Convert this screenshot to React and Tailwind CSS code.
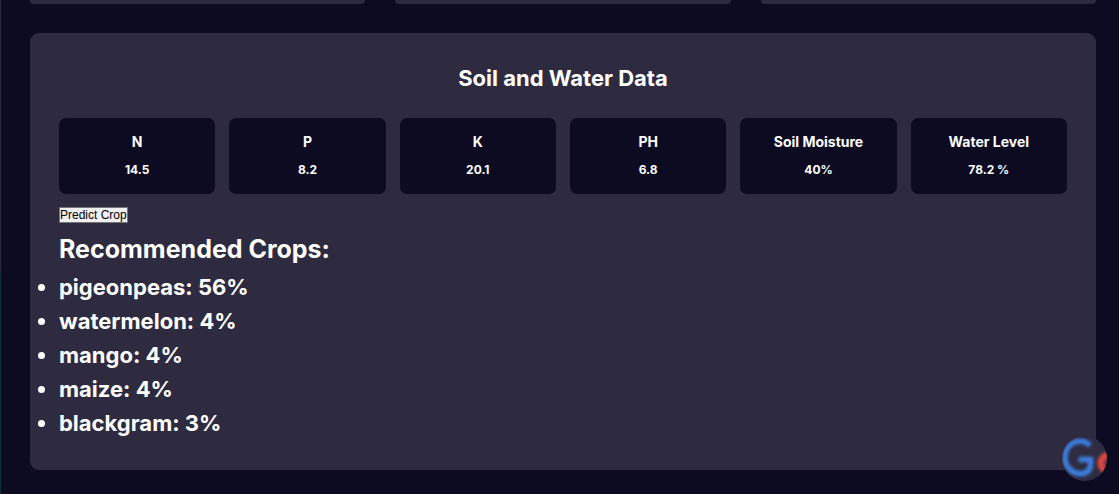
const readings = [
  { label: "N", value: "14.5" },
  { label: "P", value: "8.2" },
  { label: "K", value: "20.1" },
  { label: "PH", value: "6.8" },
  { label: "Soil Moisture", value: "40%" },
  { label: "Water Level", value: "78.2 %" },
];

const crops = [
  { name: "pigeonpeas", share: "56%" },
  { name: "watermelon", share: "4%" },
  { name: "mango", share: "4%" },
  { name: "maize", share: "4%" },
  { name: "blackgram", share: "3%" },
];

function Reading({ label, value }) {
  return (
    <div className="rounded-[7px] bg-[#0d0b21] px-2 py-[14px] text-center">
      <h3 className="text-[14px] leading-[20px]">{label}</h3>
      <p className="mt-2 text-[12px] leading-[20px]">{value}</p>
    </div>
  );
}

function FloatingLogo() {
  return (
    <a href="#assistant" aria-label="Assistant" className="fixed right-3 bottom-[13px] block size-[45px]">
      <svg viewBox="0 0 45 45" className="size-full">
        <defs>
          <clipPath id="frame">
            <rect x="0" y="1.500" width="45" height="43.500" />
          </clipPath>
          <clipPath id="disc">
            <circle cx="22.5" cy="22.5" r="22.5" />
          </clipPath>
          <filter id="soft" x="-20%" y="-20%" width="140%" height="140%">
            <feGaussianBlur stdDeviation="1.5" />
          </filter>
        </defs>
        <g clipPath="url(#frame)">
          <g clipPath="url(#disc)">
            <rect width="45" height="45" fill="#2f2c42" />
            <g filter="url(#soft)" fill="none">
              <path
                d="M28 9.500 C23 4 13.500 3.500 7.500 9.500 C1.500 16 1.500 27 7.500 33 C13.500 39 22.500 38.800 26.500 34.500 C28.500 32 29 28 28.500 23.500 H16.500"
                stroke="#3a7ddd"
                strokeWidth="5.6"
              />
              <ellipse cx="46.500" cy="27" rx="8" ry="8" stroke="#dd463c" strokeWidth="6" fill="#dd463c" fillOpacity="0.4" />
            </g>
          </g>
        </g>
      </svg>
    </a>
  );
}

export default function App() {
  return (
    <div className="flex min-h-screen bg-[#0d0b21] font-['Inter',sans-serif] font-bold text-white">
      <div className="w-px shrink-0 bg-linear-to-b from-[#2b2940] from-54% to-[#0c3038] to-56%" />
      <div className="grow pr-[23px] pb-6 pl-[29px]">
        <div className="grid grid-cols-3 gap-[30px]">
          <div className="h-1 rounded-b-[9px] bg-[#2e2b41]" />
          <div className="h-1 rounded-b-[9px] bg-[#2e2b41]" />
          <div className="h-1 rounded-b-[9px] bg-[#2e2b41]" />
        </div>
        <main className="mt-[29px] rounded-[9px] bg-[#2e2b41] px-[29px] pt-[29px] pb-[30px]">
          <h2 className="text-center text-[22px] leading-[32px]">Soil and Water Data</h2>
          <div className="mt-6 grid grid-cols-6 gap-[14px]">
            {readings.map((r) => (
              <Reading key={r.label} label={r.label} value={r.value} />
            ))}
          </div>
          <button
            type="button"
            className="mt-[13px] block border border-[#767676] bg-[#efefef] font-['Liberation_Sans',Arial,sans-serif] text-[12px] leading-[14px] font-normal text-black"
          >
            Predict Crop
          </button>
          <h1 className="mt-[5px] text-[25px] leading-[42px]">Recommended Crops:</h1>
          <ul className="list-disc text-[22px] leading-[34px]">
            {crops.map((c) => (
              <li key={c.name}>
                {c.name}: {c.share}
              </li>
            ))}
          </ul>
        </main>
      </div>
      <FloatingLogo />
    </div>
  );
}
